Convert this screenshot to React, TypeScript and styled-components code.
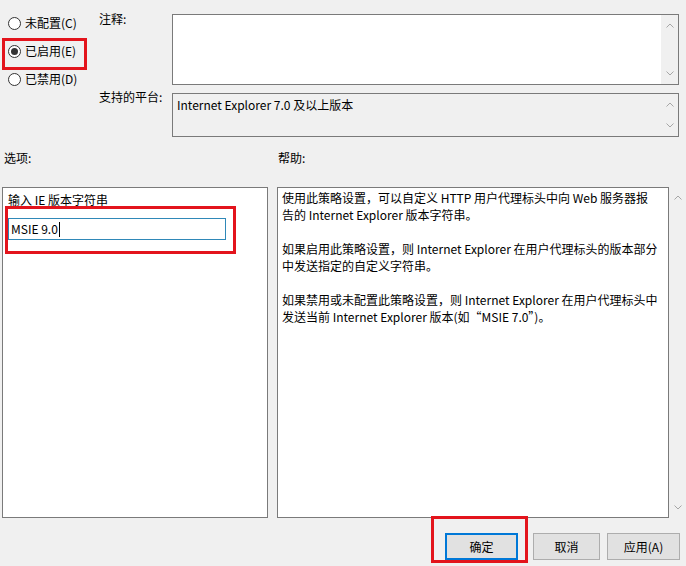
import React from "react";
import styled, { createGlobalStyle } from "styled-components";

const GlobalStyle = createGlobalStyle`
  html, body { margin: 0; padding: 0; background: #f0f0f0; }
  body {
    font-family: "Noto Sans CJK SC", "Noto Sans", sans-serif;
    font-size: 12px;
    color: #000;
  }
`;

const Window = styled.div`
  width: 686px;
  height: 566px;
  background: #f0f0f0;
  display: flex;
  flex-direction: column;
  overflow: hidden;
  box-sizing: border-box;
`;

const TopSection = styled.div`
  display: flex;
  height: 137px;
`;

const RadioList = styled.div`
  width: 99px;
  box-sizing: border-box;
  padding: 13px 0 0 8px;
  display: flex;
  flex-direction: column;
  gap: 8px;
`;

const RadioItem = styled.label`
  position: relative;
  display: flex;
  align-items: center;
  gap: 4px;
  height: 20px;
  line-height: 20px;
  white-space: nowrap;
`;

const RadioCircle = styled.span<{ $checked?: boolean }>`
  width: 13px;
  height: 13px;
  box-sizing: border-box;
  border: 1px solid #333;
  border-radius: 50%;
  background: #fff;
  display: flex;
  align-items: center;
  justify-content: center;
  &::after {
    content: "";
    width: 7px;
    height: 7px;
    border-radius: 50%;
    background: ${(p) => (p.$checked ? "#333" : "transparent")};
  }
`;

const Annotation = styled.span<{
  $top: number;
  $left: number;
  $width: number;
  $height: number;
}>`
  position: absolute;
  top: ${(p) => p.$top}px;
  left: ${(p) => p.$left}px;
  width: ${(p) => p.$width}px;
  height: ${(p) => p.$height}px;
  box-sizing: border-box;
  border: 3px solid #e3141c;
  pointer-events: none;
  z-index: 2;
`;

const FormGrid = styled.div`
  display: grid;
  grid-template-columns: 73px 507px;
  grid-template-rows: 71px 44px;
  row-gap: 8px;
  padding-top: 14px;
`;

const FieldLabel = styled.div<{ $offset: number }>`
  line-height: 16px;
  margin-top: ${(p) => p.$offset}px;
  white-space: nowrap;
`;

const Box = styled.div<{ $readonly?: boolean }>`
  display: flex;
  box-sizing: border-box;
  border: 1px solid #7a7a7a;
  background: ${(p) => (p.$readonly ? "#f0f0f0" : "#fff")};
`;

const BoxText = styled.div`
  flex: 1;
  padding: 2px 4px;
  line-height: 17px;
  white-space: nowrap;
`;

const ScrollColumn = styled.div<{ $pad: number; $bg?: string }>`
  width: 17px;
  flex: none;
  display: flex;
  flex-direction: column;
  justify-content: space-between;
  align-items: center;
  padding: ${(p) => p.$pad}px 0;
  box-sizing: border-box;
  background: ${(p) => p.$bg || "transparent"};
`;

const Chevron = ({ down }: { down?: boolean }) => (
  <svg width="8" height="5" viewBox="0 0 8 5">
    <polyline
      points={down ? "0.5,0.5 4,4 7.5,0.5" : "0.5,4.5 4,1 7.5,4.5"}
      fill="none"
      stroke="#a6a6a6"
      strokeWidth="1"
    />
  </svg>
);

const SectionLabels = styled.div`
  display: flex;
  margin-top: 13px;
  line-height: 16px;
  height: 16px;
`;

const SectionLabel = styled.div<{ $width: number; $pad: number }>`
  width: ${(p) => p.$width}px;
  padding-left: ${(p) => p.$pad}px;
  box-sizing: border-box;
`;

const Panels = styled.div`
  display: flex;
  margin-top: 21px;
  height: 331px;
  padding-left: 2px;
`;

const OptionsPanel = styled.div`
  width: 266px;
  box-sizing: border-box;
  border: 1px solid #7a7a7a;
  background: #fff;
  padding: 4px 0 0 5px;
  margin-right: 9px;
`;

const OptionLabel = styled.div`
  line-height: 16px;
  height: 16px;
  white-space: nowrap;
`;

const InputWrap = styled.div`
  position: relative;
  margin-top: 10px;
  width: 218px;
`;

const TextInput = styled.div`
  height: 22px;
  box-sizing: border-box;
  border: 1px solid #2f88b8;
  background: #fff;
  display: flex;
  align-items: center;
  padding-left: 2px;
  line-height: 20px;
`;

const Caret = styled.span`
  display: inline-block;
  width: 1px;
  height: 15px;
  background: #000;
  margin-left: 1px;
`;

const HelpPanel = styled.div`
  width: 392px;
  box-sizing: border-box;
  border: 1px solid #7a7a7a;
  background: #fff;
  padding: 1px 0 0 4px;
`;

const HelpLine = styled.div`
  line-height: 17px;
  height: 17px;
  white-space: nowrap;
`;

const ButtonRow = styled.div`
  display: flex;
  justify-content: flex-end;
  align-items: center;
  margin-top: 15px;
  padding-right: 6px;
  gap: 7px;
`;

const ButtonSlot = styled.div<{ $after?: number }>`
  position: relative;
  margin-right: ${(p) => p.$after || 0}px;
`;

const Button = styled.button<{ $default?: boolean; $width: number }>`
  width: ${(p) => p.$width}px;
  height: 27px;
  box-sizing: border-box;
  background: #e1e1e1;
  border: ${(p) => (p.$default ? "2px solid #0078d7" : "1px solid #adadad")};
  font-family: inherit;
  font-size: 12px;
  color: #000;
  padding: 0;
  display: flex;
  align-items: center;
  justify-content: center;
`;

const helpParagraphs = [
  [
    "使用此策略设置，可以自定义 HTTP 用户代理标头中向 Web 服务器报",
    "告的 Internet Explorer 版本字符串。",
  ],
  [
    "如果启用此策略设置，则 Internet Explorer 在用户代理标头的版本部分",
    "中发送指定的自定义字符串。",
  ],
  [
    "如果禁用或未配置此策略设置，则 Internet Explorer 在用户代理标头中",
    "发送当前 Internet Explorer 版本(如“MSIE 7.0”)。",
  ],
];

export default function App() {
  return (
    <>
      <GlobalStyle />
      <Window>
        <TopSection>
          <RadioList>
            <RadioItem>
              <RadioCircle />
              未配置(C)
            </RadioItem>
            <RadioItem>
              <RadioCircle $checked />
              已启用(E)
              <Annotation $top={-3} $left={-6} $width={85} $height={32} />
            </RadioItem>
            <RadioItem>
              <RadioCircle />
              已禁用(D)
            </RadioItem>
          </RadioList>
          <FormGrid>
            <FieldLabel $offset={-3}>注释:</FieldLabel>
            <Box>
              <BoxText />
              <ScrollColumn $pad={8} $bg="#f0f0f0">
                <Chevron />
                <Chevron down />
              </ScrollColumn>
            </Box>
            <FieldLabel $offset={-4}>支持的平台:</FieldLabel>
            <Box $readonly>
              <BoxText>Internet Explorer 7.0 及以上版本</BoxText>
              <ScrollColumn $pad={8}>
                <Chevron />
                <Chevron down />
              </ScrollColumn>
            </Box>
          </FormGrid>
        </TopSection>

        <SectionLabels>
          <SectionLabel $width={277} $pad={4}>选项:</SectionLabel>
          <SectionLabel $width={200} $pad={1}>帮助:</SectionLabel>
        </SectionLabels>

        <Panels>
          <OptionsPanel>
            <OptionLabel>输入 IE 版本字符串</OptionLabel>
            <InputWrap>
              <TextInput>
                MSIE 9.0
                <Caret />
              </TextInput>
              <Annotation $top={-12} $left={-3} $width={231} $height={48} />
            </InputWrap>
          </OptionsPanel>
          <HelpPanel>
            {helpParagraphs.map((para, i) => (
              <React.Fragment key={i}>
                {i > 0 && <HelpLine />}
                {para.map((line, j) => (
                  <HelpLine key={j}>{line}</HelpLine>
                ))}
              </React.Fragment>
            ))}
          </HelpPanel>
          <ScrollColumn $pad={8}>
            <Chevron />
            <Chevron down />
          </ScrollColumn>
        </Panels>

        <ButtonRow>
          <ButtonSlot $after={8}>
            <Button $default $width={73}>确定</Button>
            <Annotation $top={-17} $left={-14} $width={97} $height={47} />
          </ButtonSlot>
          <Button $width={67}>取消</Button>
          <Button $width={73}>应用(A)</Button>
        </ButtonRow>
      </Window>
    </>
  );
}
